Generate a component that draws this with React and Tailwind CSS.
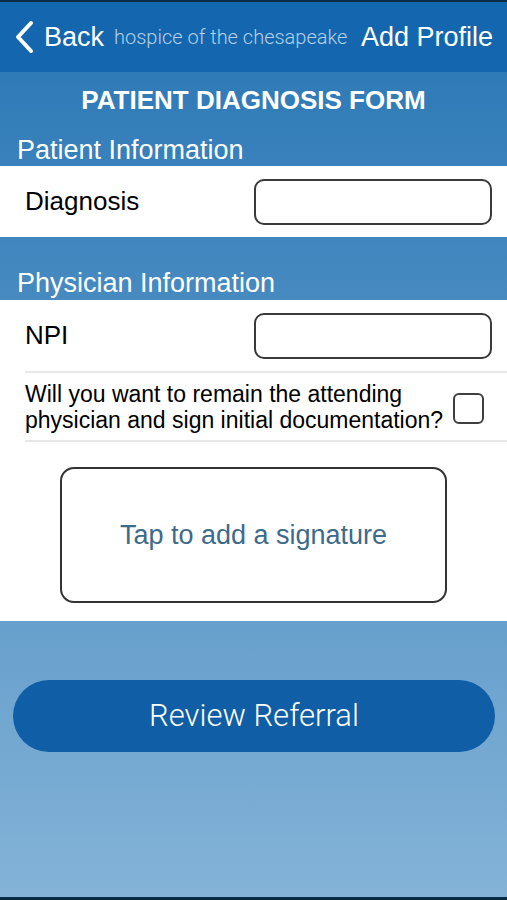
import React from 'react';

const sans = { fontFamily: '"Liberation Sans", Arial, sans-serif' };

function ChevronLeft() {
  return (
    <svg width="22" height="34" viewBox="0 0 22 34" fill="none">
      <path d="M18 3 L5 17 L18 31" stroke="white" strokeWidth="4" strokeLinecap="round" strokeLinejoin="round" />
    </svg>
  );
}

export default function App() {
  return (
    <div
      className="w-[507px] h-[900px] flex flex-col bg-linear-to-b from-[#2676b5] via-[#5594c6] to-[#84b3d7] overflow-hidden"
      style={sans}
    >
      <div className="h-[2px] bg-[#0b2b45]" />

      {/* Nav bar */}
      <div className="h-[70px] bg-[#1467ae] flex items-center pl-[13px] pr-[14px] text-white">
        <ChevronLeft />
        <span className="ml-[9px] text-[27px] leading-none">Back</span>
        <span className="ml-[10px] text-[20px] leading-none text-[#b4cfe8] font-light" style={{ fontFamily: 'Roboto, sans-serif' }}>
          hospice of the chesapeake
        </span>
        <span className="ml-auto text-[27px] leading-none">Add Profile</span>
      </div>

      {/* Title */}
      <div className="h-[56px] flex items-center justify-center">
        <h1 className="text-white font-bold text-[26px] leading-none">PATIENT DIAGNOSIS FORM</h1>
      </div>

      {/* Patient Information */}
      <div className="h-[38px] pt-[9px] pl-[17px] text-white text-[27px] leading-[27px]">Patient Information</div>
      <div className="h-[71px] bg-white flex items-center justify-between pl-[25px] pr-[15px]">
        <span className="text-[26px] text-black">Diagnosis</span>
        <div className="w-[238px] h-[46px] rounded-[10px] border-2 border-[#3a3a3a] bg-white" />
      </div>

      {/* Physician Information */}
      <div className="h-[63px] flex items-end pb-[3px] pl-[17px] text-white text-[27px] leading-[27px]">
        Physician Information
      </div>
      <div className="h-[321px] bg-white flex flex-col">
        <div className="h-[71px] flex items-center justify-between pl-[25px] pr-[15px]">
          <span className="text-[26px] text-black">NPI</span>
          <div className="w-[238px] h-[46px] rounded-[10px] border-2 border-[#3a3a3a] bg-white" />
        </div>
        <div className="ml-[25px] h-[71px] border-t-2 border-b-2 border-[#e8e8e8] flex items-center justify-between pr-[23px]">
          <p className="text-[23px] leading-[26px] text-black">
            Will you want to remain the attending
            <br />
            physician and sign initial documentation?
          </p>
          <div className="w-[31px] h-[31px] rounded-[6px] border-2 border-[#3f3f3f] mt-[4px]" />
        </div>
        <div className="flex-1 flex justify-center pt-[25px]">
          <div className="w-[387px] h-[136px] rounded-[14px] border-2 border-[#333] flex items-center justify-center">
            <span className="text-[27px] text-[#3e6b89]">Tap to add a signature</span>
          </div>
        </div>
      </div>

      {/* Button */}
      <div className="pt-[59px] px-[13px] pr-[12px]">
        <button className="w-full h-[72px] rounded-full bg-[#0f5ea6] text-white text-[31px] font-light" style={{ fontFamily: 'Roboto, sans-serif' }}>
          Review Referral
        </button>
      </div>

      <div className="flex-1" />
      <div className="h-[3px] bg-[#0b2b45]" />
    </div>
  );
}
